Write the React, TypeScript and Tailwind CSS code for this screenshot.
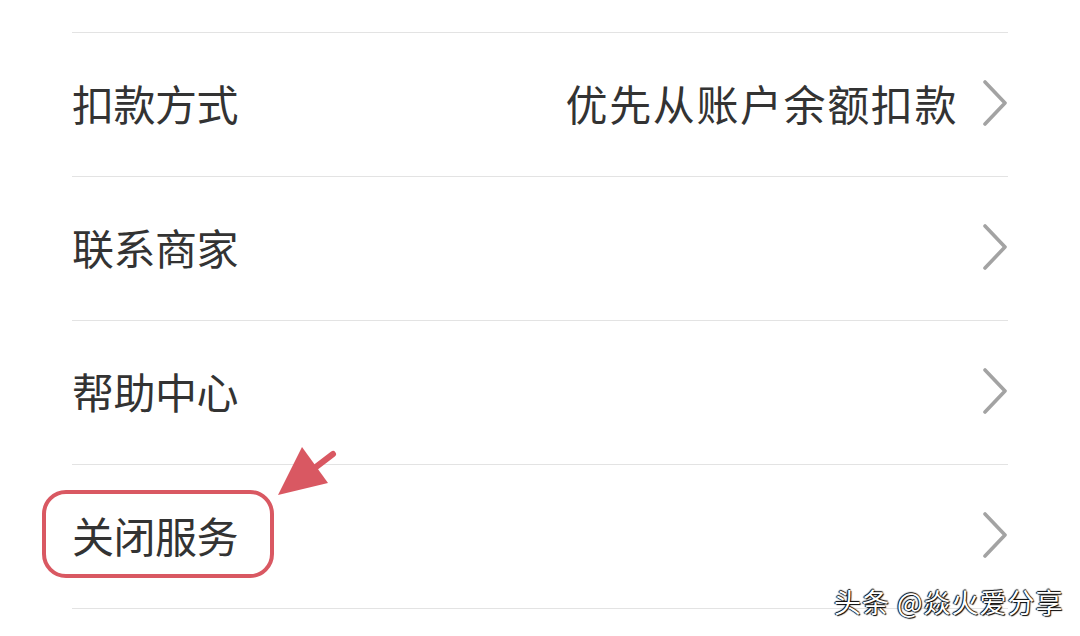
import React from "react";

const font = { fontFamily: '"Noto Sans CJK SC", "Noto Sans", sans-serif' };

function Chevron() {
  return (
    <svg width="26" height="46" viewBox="0 0 26 46" className="shrink-0">
      <polyline points="3,2 23,23 3,44" fill="none" stroke="#a3a3a3" strokeWidth="3.6" strokeLinecap="round" strokeLinejoin="round" />
    </svg>
  );
}

function Row({ label, value }: { label: string; value?: string }) {
  return (
    <div className="flex items-center justify-between h-[144px] pb-[4px] border-b border-[#e3e3e3]">
      <span className="text-[42px] leading-none text-[#333333] tracking-[-0.5px]">{label}</span>
      <div className="flex items-center gap-[24px]">
        {value && <span className="text-[42px] leading-none text-[#333333] tracking-[1.6px]">{value}</span>}
        <Chevron />
      </div>
    </div>
  );
}

export default function App() {
  return (
    <div className="relative w-[1080px] h-[636px] bg-white overflow-hidden" style={font}>
      <div className="pt-[32px] pl-[72px] pr-[72px]">
        <div className="border-t border-[#e3e3e3]">
          <Row label="扣款方式" value="优先从账户余额扣款" />
          <Row label="联系商家" />
          <Row label="帮助中心" />
          <Row label="关闭服务" />
        </div>
      </div>

      {/* annotation */}
      <div className="absolute left-[42px] top-[490px] w-[232px] h-[88px] rounded-[24px] border-[4px] border-[#d95862]" />
      <svg className="absolute left-0 top-0" width="1080" height="636">
        <line x1="333" y1="454" x2="312" y2="470" stroke="#d95862" strokeWidth="6" strokeLinecap="round" />
        <polygon points="278,495 302,447 328,483" fill="#d95862" />
      </svg>

      <div
        className="absolute left-[834px] top-[588px] text-[27px] leading-none text-white tracking-[1px]"
        style={{ textShadow: "1px 1px 1px #000, -1px 0 1px #000, 0 -1px 1px #000" }}
      >
        头条 @焱火爱分享
      </div>
    </div>
  );
}
